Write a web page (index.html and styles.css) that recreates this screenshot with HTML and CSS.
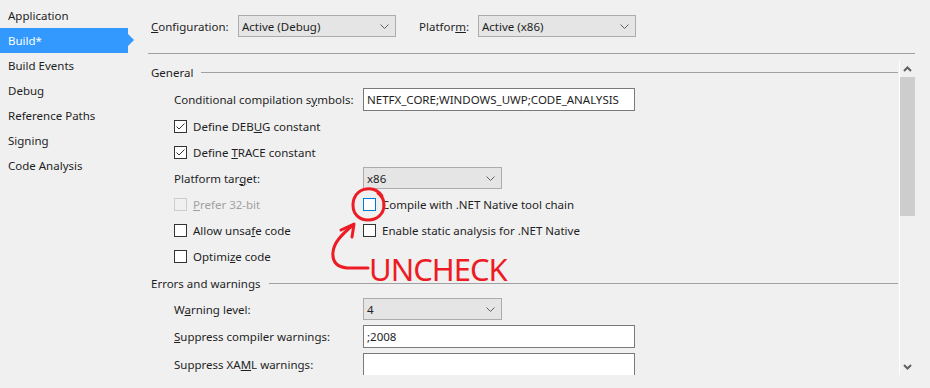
FILE: index.html
```html
<!DOCTYPE html>
<html lang="en">
<head>
  <meta charset="UTF-8" />
  <title>Project Properties - Build</title>
  <link rel="stylesheet" href="styles.css">
</head>
<body>
  <div class="window">
    <ul class="nav">
      <li>Application</li>
      <li class="active">Build*</li>
      <li>Build Events</li>
      <li>Debug</li>
      <li>Reference Paths</li>
      <li>Signing</li>
      <li>Code Analysis</li>
    </ul>

    <div class="main">
      <div class="toolbar">
        <span class="tb-label"><u>C</u>onfiguration:</span>
        <div class="select wide">Active (Debug)
          <svg class="chev" width="9" height="5" viewBox="0 0 9 5"><path d="M0.5 0.5 L4.5 4.5 L8.5 0.5" /></svg>
        </div>
        <span class="tb-label second">Platfor<u>m</u>:</span>
        <div class="select wide">Active (x86)
          <svg class="chev" width="9" height="5" viewBox="0 0 9 5"><path d="M0.5 0.5 L4.5 4.5 L8.5 0.5" /></svg>
        </div>
      </div>

      <div class="scroller">
        <div class="content">
          <section class="group">
            <h3 class="group-title">General</h3>

            <div class="row tall">
              <span class="label">Conditional compilation s<u>y</u>mbols:</span>
              <div class="textbox wide">NETFX_CORE;WINDOWS_UWP;CODE_ANALYSIS</div>
            </div>
            <div class="row">
              <span class="check checked">
                <svg width="11" height="11" viewBox="0 0 11 11"><path d="M1.5 5.5 L4 8 L9.5 2.5" /></svg>
              </span>
              <span>Define DEB<u>U</u>G constant</span>
            </div>
            <div class="row">
              <span class="check checked">
                <svg width="11" height="11" viewBox="0 0 11 11"><path d="M1.5 5.5 L4 8 L9.5 2.5" /></svg>
              </span>
              <span>Define <u>T</u>RACE constant</span>
            </div>
            <div class="row">
              <span class="label">Platform tar<u>g</u>et:</span>
              <div class="select narrow">x86
                <svg class="chev" width="9" height="5" viewBox="0 0 9 5"><path d="M0.5 0.5 L4.5 4.5 L8.5 0.5" /></svg>
              </div>
            </div>
            <div class="row">
              <div class="col disabled">
                <span class="check"></span>
                <span><u>P</u>refer 32-bit</span>
              </div>
              <div class="col">
                <span class="check focused"></span>
                <span>Compile with .NET Native tool chain</span>
              </div>
            </div>
            <div class="row">
              <div class="col">
                <span class="check"></span>
                <span>Allow unsa<u>f</u>e code</span>
              </div>
              <div class="col">
                <span class="check"></span>
                <span>Enable static analysis for .NET Native</span>
              </div>
            </div>
            <div class="row">
              <span class="check"></span>
              <span>Optimi<u>z</u>e code</span>
            </div>
          </section>

          <section class="group">
            <h3 class="group-title">Errors and warnings</h3>

            <div class="row">
              <span class="label">W<u>a</u>rning level:</span>
              <div class="select narrow">4
                <svg class="chev" width="9" height="5" viewBox="0 0 9 5"><path d="M0.5 0.5 L4.5 4.5 L8.5 0.5" /></svg>
              </div>
            </div>
            <div class="row tall">
              <span class="label"><u>S</u>uppress compiler warnings:</span>
              <div class="textbox wide">;2008</div>
            </div>
            <div class="row tall">
              <span class="label">Suppress XA<u>M</u>L warnings:</span>
              <div class="textbox wide"></div>
            </div>
          </section>
        </div>

        <div class="scrollbar">
          <div class="sb-btn">
            <svg width="9" height="6" viewBox="0 0 9 6"><path d="M1 5 L4.5 1.5 L8 5" /></svg>
          </div>
          <div class="sb-track">
            <div class="sb-thumb"></div>
          </div>
          <div class="sb-btn">
            <svg width="9" height="6" viewBox="0 0 9 6"><path d="M1 1 L4.5 4.5 L8 1" /></svg>
          </div>
        </div>
      </div>
    </div>
  </div>

  <!-- hand-drawn markup on top of the screenshot -->
  <svg class="annotation" width="930" height="388" viewBox="0 0 930 388">
    <path d="M382 196 C378 190 372 188 366 189 C358 190 353 197 353 205 C353 214 359 220 368 220 C377 220 384 214 384 205 C384 200 382 196 378 193" />
    <path d="M368 268 L347 268 C337 267 332 262 333 252 C334 243 340 236 353 225" />
    <path d="M341 230 L354 224 L352 237" />
    <text x="369" y="281">UNCHECK</text>
  </svg>
</body>
</html>
```

FILE: styles.css
```css
body {
  margin: 0;
  background-color: #f0f0f0;
  font-family: "Noto Sans", "Open Sans", sans-serif;
  font-size: 11.5px;
  color: #1e1e1e;
  overflow: hidden;
}

.window {
  display: flex;
  width: 930px;
  height: 388px;
}

/* left page list */
.nav {
  list-style: none;
  margin: 0;
  padding: 3px 0 0;
  width: 148px;
  flex-shrink: 0;
}

.nav li {
  height: 25px;
  line-height: 25px;
  padding-left: 8px;
  width: 128px;
  box-sizing: border-box;
}

.nav li.active {
  position: relative;
  background-color: #3399ff;
  color: #fff;
}

.nav li.active::after {
  content: "";
  position: absolute;
  left: 100%;
  top: 6px;
  border-left: 6px solid #3399ff;
  border-top: 6px solid transparent;
  border-bottom: 6px solid transparent;
}

.main {
  width: 767px;
  display: flex;
  flex-direction: column;
}

.toolbar {
  display: flex;
  align-items: center;
  padding: 15px 0 16px 3px;
  border-bottom: 1px solid #a0a0a0;
}

.tb-label {
  width: 87px;
}

.tb-label.second {
  width: 59px;
  margin-left: 23px;
}

/* combo boxes and text boxes */
.select {
  display: flex;
  align-items: center;
  justify-content: space-between;
  height: 22px;
  box-sizing: border-box;
  padding: 0 6px 0 3px;
  background-color: #e5e5e5;
  border: 1px solid #acacac;
}

.select.wide {
  width: 158px;
}

.select.narrow {
  width: 139px;
}

.chev path {
  fill: none;
  stroke: #606060;
  stroke-width: 1;
}

.textbox {
  height: 23px;
  line-height: 21px;
  box-sizing: border-box;
  padding: 0 3px;
  background-color: #fff;
  border: 1px solid #7a7a7a;
  white-space: nowrap;
}

.textbox.wide {
  width: 272px;
}

.scroller {
  display: flex;
  height: 321px;
}

.content {
  flex: 1;
  padding: 5px 1px 0 3px;
  overflow: hidden;
}

.group + .group {
  margin-top: 1px;
}

.group-title {
  display: flex;
  align-items: center;
  gap: 8px;
  height: 26px;
  margin: 0;
  font-size: 11.5px;
  font-weight: normal;
}

.group-title::after {
  content: "";
  flex: 1;
  height: 1px;
  background-color: #a0a0a0;
}

.row {
  display: flex;
  align-items: center;
  height: 26px;
  padding-left: 23px;
  white-space: nowrap;
}

.row.tall {
  height: 28px;
}

.label,
.row .col:first-child {
  width: 189px;
  flex-shrink: 0;
}

.col {
  display: flex;
  align-items: center;
}

/* checkboxes */
.check {
  display: inline-flex;
  align-items: center;
  justify-content: center;
  width: 13px;
  height: 13px;
  box-sizing: border-box;
  margin-right: 6px;
  background-color: #fff;
  border: 1px solid #333;
}

.check svg path {
  fill: none;
  stroke: #333;
  stroke-width: 1;
}

.check.focused {
  border-color: #0078d7;
}

.disabled {
  color: #a0a0a0;
}

.disabled .check {
  border-color: #cccccc;
  background-color: #f0f0f0;
}

/* vertical scrollbar */
.scrollbar {
  width: 15px;
  margin-top: 6px;
  border-left: 1px solid #fff;
  display: flex;
  flex-direction: column;
}

.sb-btn {
  height: 17px;
  display: flex;
  align-items: center;
  justify-content: center;
}

.sb-btn path {
  fill: none;
  stroke: #606060;
  stroke-width: 2;
}

.sb-track {
  flex: 1;
}

.sb-thumb {
  height: 139px;
  background-color: #cdcdcd;
}

/* red paint-style note */
.annotation {
  position: absolute;
  top: 0;
  left: 0;
  pointer-events: none;
}

.annotation path {
  fill: none;
  stroke: #ed1c24;
  stroke-width: 3;
  stroke-linecap: round;
  stroke-linejoin: round;
}

.annotation text {
  fill: #ed1c24;
  font-family: "Noto Sans", sans-serif;
  font-size: 31px;
  letter-spacing: -1px;
}
```
